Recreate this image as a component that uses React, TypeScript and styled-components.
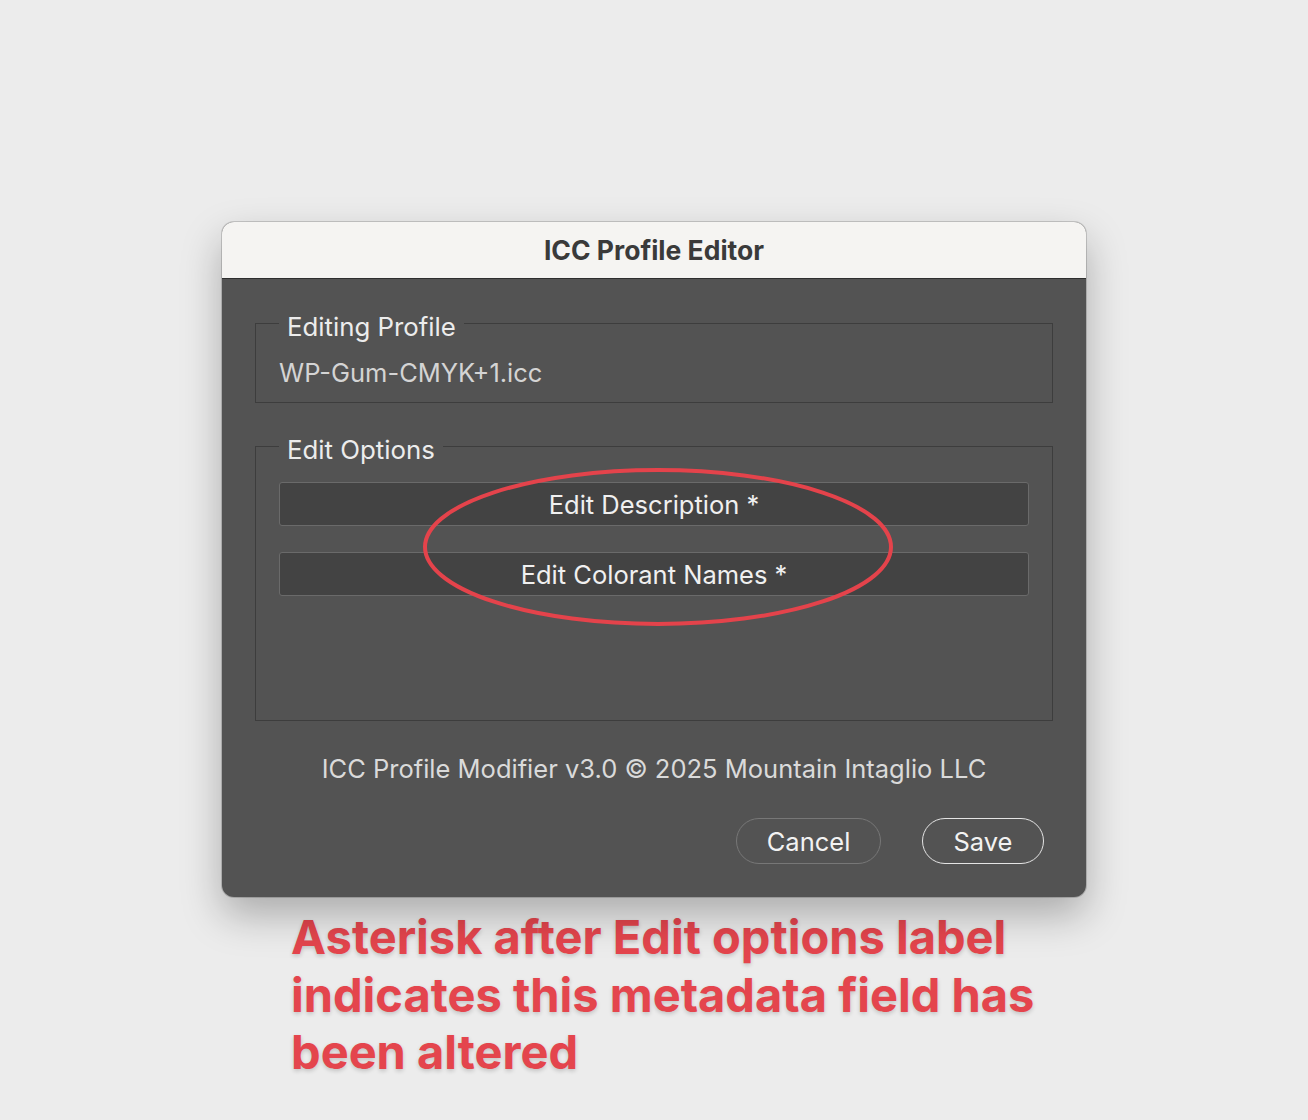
import styled, {createGlobalStyle} from 'styled-components'

// ── Global ──

const GlobalStyle = createGlobalStyle`
  html, body {
    margin: 0;
    padding: 0;
    background: #ececec;
  }
  body {
    font-family: Inter, 'Noto Sans', 'Liberation Sans', sans-serif;
    -webkit-font-smoothing: antialiased;
  }
`

// ── Styled Components ──

const Page = styled.div`
  width: 1308px;
  height: 1120px;
  display: flex;
  flex-direction: column;
  align-items: center;
  padding-top: 222px;
  box-sizing: border-box;
`

const Dialog = styled.div`
  position: relative;
  width: 864px;
  border-radius: 12px;
  overflow: hidden;
  background: #535353;
  box-shadow:
    0 0 0 1px rgba(0, 0, 0, 0.16),
    0 18px 40px rgba(0, 0, 0, 0.28);
`

const TitleBar = styled.div`
  height: 56px;
  display: flex;
  align-items: center;
  justify-content: center;
  background: #f5f4f2;
  border-bottom: 1px solid #2e2e2e;
  color: #3a3a3a;
  font-size: 26.5px;
  font-weight: 700;
`

const Body = styled.div`
  padding: 26px 33px 33px;
  display: flex;
  flex-direction: column;
`

const Group = styled.fieldset<{$gap?: number}>`
  margin: ${(p) => p.$gap ?? 0}px 0 0;
  padding: 18px 23px 15px;
  border: 1px solid #3d3d3d;
  display: flex;
  flex-direction: column;
  gap: 26px;
`

const GroupLegend = styled.legend`
  padding: 8px 8px 0;
  font-size: 25.8px;
  line-height: 28px;
  color: #ececec;
`

const Value = styled.div`
  font-size: 25.5px;
  line-height: 28px;
  color: #d4d4d4;
`

const OptionButton = styled.button`
  height: 44px;
  border-radius: 3px;
  border: 1.5px solid #6a6a6a;
  background: #434343;
  color: #f0f0f0;
  font-family: inherit;
  font-size: 25.5px;
  cursor: pointer;
`

const OptionsFill = styled.div`
  height: 83px;
`

const Footer = styled.div`
  margin-top: 34px;
  text-align: center;
  font-size: 25.5px;
  line-height: 28px;
  color: #dadada;
`

const Actions = styled.div`
  margin-top: 35px;
  display: flex;
  justify-content: flex-end;
  gap: 41px;
  padding-right: 9px;
`

const PillButton = styled.button<{$primary?: boolean}>`
  height: 46px;
  width: ${(p) => (p.$primary ? 122 : 145)}px;
  border-radius: 23px;
  border: 1.5px solid ${(p) => (p.$primary ? '#e4e4e4' : '#777')};
  background: transparent;
  color: #f2f2f2;
  font-family: inherit;
  font-size: 25.5px;
  cursor: pointer;
`

const Marker = styled.svg`
  position: absolute;
  left: 198px;
  top: 243px;
  pointer-events: none;
`

const Note = styled.div`
  width: 864px;
  box-sizing: border-box;
  padding-left: 69px;
  margin-top: 11px;
  font-size: 47px;
  font-weight: 700;
  line-height: 57.5px;
  color: #e4454d;
  text-shadow: 0 2px 4px rgba(0, 0, 0, 0.18);
`

// ── Component ──

export default function App() {
  return (
    <>
      <GlobalStyle />
      <Page>
        <Dialog>
          <TitleBar>ICC Profile Editor</TitleBar>
          <Body>
            <Group>
              <GroupLegend>Editing Profile</GroupLegend>
              <Value>WP-Gum-CMYK+1.icc</Value>
            </Group>
            <Group $gap={25}>
              <GroupLegend>Edit Options</GroupLegend>
              <OptionButton type="button">Edit Description *</OptionButton>
              <OptionButton type="button">Edit Colorant Names *</OptionButton>
              <OptionsFill />
            </Group>
            <Footer>ICC Profile Modifier v3.0 © 2025 Mountain Intaglio LLC</Footer>
            <Actions>
              <PillButton type="button">Cancel</PillButton>
              <PillButton type="button" $primary>
                Save
              </PillButton>
            </Actions>
          </Body>
          <Marker width="476" height="164" viewBox="0 0 476 164">
            <ellipse cx="238" cy="82" rx="233" ry="77" fill="none" stroke="#e4434b" strokeWidth="4" />
          </Marker>
        </Dialog>
        <Note>
          Asterisk after Edit options label
          <br />
          indicates this metadata field has
          <br />
          been altered
        </Note>
      </Page>
    </>
  )
}
